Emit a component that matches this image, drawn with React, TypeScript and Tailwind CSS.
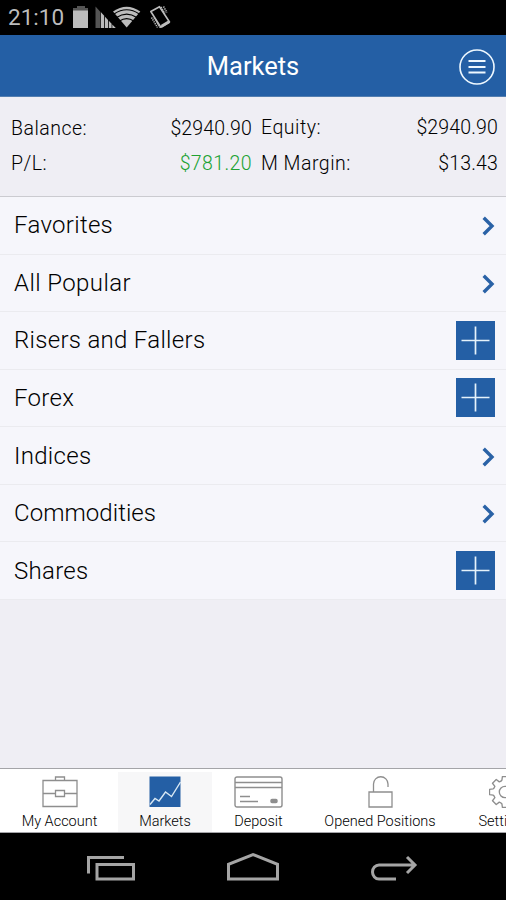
import React from 'react';

type Market = {
  name: string;
  expandable?: boolean;
  tracking?: string;
};

const markets: Market[] = [
  { name: 'Favorites' },
  { name: 'All Popular', tracking: 'tracking-[0.4px]' },
  { name: 'Risers and Fallers', expandable: true },
  { name: 'Forex', expandable: true },
  { name: 'Indices' },
  { name: 'Commodities', tracking: 'tracking-[0.05px]' },
  { name: 'Shares', expandable: true },
];

const StatusBar: React.FC = () => (
  <div className="flex h-[35px] shrink-0 items-center bg-black text-[#bcbcbc]">
    <span className="w-[73px] pl-2 text-[22.5px] leading-[35px]">21:10</span>
    <svg className="h-[35px] w-[110px]" viewBox="73 0 110 35" fill="currentColor">
      <path d="M77 6h8v2h3v3H73V8h4z" fill="#555" />
      <path d="M73 10.5h15V28H73z" />
      <path d="M95.5 6.5l5 5.5v16h-5z" fill="#555" />
      <path d="M101 12.3l3.2 3.5V28H101zM105 16.7l3 3.3v8h-3zM108.8 20.8l2.8 3V28h-2.8zM112.3 24.5l3.5 3.5h-3.5z" />
      <path d="M126.7 27.5L113 11.5Q126.7 1.8 140.3 11.5z" />
      <g fill="none" stroke="#000" strokeWidth="1.2">
        <path d="M114 14Q126.7 5.5 139.3 14" />
        <path d="M116.5 17.5Q126.7 10.7 136.8 17.5" />
        <path d="M119.5 21Q126.7 16.2 133.8 21" />
      </g>
      <g fill="none" stroke="currentColor">
        <path d="M150.8 11.5L159.5 6.7L169.5 22L160.8 27.2z" strokeWidth="1.6" strokeLinejoin="round" />
        <path d="M161 7l4 6.5M163.5 6.5l3.5 6M151.5 17.5l6 10M154 17.5l6 10" strokeWidth="1.5" strokeDasharray="1.3 0.9" />
        <path d="M161.5 26.3l7.5-4.6" strokeWidth="2.8" />
      </g>
    </svg>
  </div>
);

const Header: React.FC = () => (
  <header className="grid h-[62px] shrink-0 grid-cols-[1fr_auto_1fr] items-center border-b border-[#537eb0] bg-[#245fa5] text-white">
    <h1 className="col-start-2 text-[25.5px] leading-8">Markets</h1>
    <button className="mr-[11px] justify-self-end" aria-label="Menu">
      <svg className="mt-[3px] h-9 w-9" viewBox="0 0 36 36" fill="none" stroke="#eef8ff">
        <circle cx="18" cy="18" r="17" strokeWidth="1.6" />
        <path d="M9.5 12h17M9.5 18h17M9.5 23.5h17" strokeWidth="1.8" />
      </svg>
    </button>
  </header>
);

const AccountSummary: React.FC = () => (
  <section className="grid h-[100px] shrink-0 grid-cols-[241px_237px] content-start gap-x-[9px] border-b border-[#cbcbd0] bg-[#efeef4] pt-[13px] pl-[11px] text-[19.5px] leading-[35px] font-light text-black">
    <div className="flex justify-between pt-px">
      <span className="tracking-[0.5px]">Balance:</span>
      <span className="tracking-[0.15px]">$2940.90</span>
    </div>
    <div className="flex justify-between">
      <span className="tracking-[0.5px]">Equity:</span>
      <span className="tracking-[0.15px]">$2940.90</span>
    </div>
    <div className="flex justify-between">
      <span className="tracking-[0.5px]">P/L:</span>
      <span className="tracking-[0.4px] text-[#20a232]">$781.20</span>
    </div>
    <div className="flex justify-between">
      <span className="tracking-[0.5px]">M Margin:</span>
      <span className="tracking-[0.15px]">$13.43</span>
    </div>
  </section>
);

const MarketRow: React.FC<{ market: Market }> = ({ market }) => (
  <li className="flex items-center justify-between border-b border-[#ebebef] pr-[11px] pl-[14px]">
    <span className={`text-[24px] leading-8 font-light ${market.tracking ?? 'tracking-[0.3px]'}`}>
      {market.name}
    </span>
    {market.expandable ? (
      <svg className="h-[39px] w-[39px] bg-[#245fa5]" viewBox="0 0 39 39" fill="none" stroke="#e5f2fb">
        <path d="M5.5 19.5h28M19.5 5.5v28" strokeWidth="1.7" />
      </svg>
    ) : (
      <svg className="mt-[2px] h-5 w-[13px]" viewBox="0 0 13 20" fill="none" stroke="#2a62a6">
        <path d="M1.7 1.7L10 10L1.7 18.3" strokeWidth="3.4" />
      </svg>
    )}
  </li>
);

const Tab: React.FC<{ label: string; className: string; children: React.ReactNode }> = ({
  label,
  className,
  children,
}) => (
  <button className={`flex shrink-0 flex-col items-center pt-1 whitespace-nowrap ${className}`}>
    {children}
    <span className="mt-1 text-[14.5px] leading-5 font-light text-black">{label}</span>
  </button>
);

const TabBar: React.FC = () => (
  <nav className="flex h-[65px] shrink-0 overflow-hidden border-t border-b border-[#a4a4a8] bg-white pt-[3px]">
    <Tab label="My Account" className="w-[118px] pl-px">
      <svg className="h-8 w-9" viewBox="0 0 36 32" fill="none" stroke="#8e8e8e" strokeWidth="1.3">
        <path d="M1 4.5h34v26H1zM13.5 4.5V1h9v3.5M1 17.5h12.5M22.5 17.5H35M13.5 14.5h9v6h-9z" />
      </svg>
    </Tab>
    <Tab label="Markets" className="w-[94px] bg-[#f7f7f8]">
      <svg className="h-8 w-8" viewBox="0 0 32 32" fill="none">
        <path d="M.5 .5h31v30.5H.5z" fill="#245fa5" />
        <path d="M1 28.5l5-6 4 2.5 6.5-9 6 4.5L31.5 6" stroke="#d8e8f4" strokeWidth="1.4" />
      </svg>
    </Tab>
    <Tab label="Deposit" className="w-[92px] pl-px">
      <svg className="h-8 w-[49px]" viewBox="0 0 49 32" fill="none" stroke="#8e8e8e" strokeWidth="1.4">
        <rect x="1" y="1" width="47" height="30" rx="2" />
        <path d="M1 6.5h47M1 11.5h47M6 20.5h10M6 25.5h18" />
        <rect x="37" y="23.5" width="6" height="3" rx="1" fill="#8e8e8e" />
      </svg>
    </Tab>
    <Tab label="Opened Positions" className="w-[152px]">
      <svg className="h-8 w-[25px]" viewBox="0 0 25 32" fill="none" stroke="#8e8e8e" strokeWidth="1.3">
        <path d="M1 16h23v15H1zM5.5 16V8a7 7 0 0 1 14.5 0v3" />
      </svg>
    </Tab>
    <Tab label="Settings" className="w-[97px]">
      <svg className="h-8 w-8" viewBox="0.5 0.5 31 31" fill="none" stroke="#8e8e8e" strokeWidth="1.3" strokeLinejoin="round">
        <path d="M13.5 1h5l.5 3.5q.5 1 2.5 1.7l3-2.3 3.6 3.6-2.3 3q.7 2 1.7 2.5l3.5.5v5l-3.5.5q-1 .5-1.7 2.5l2.3 3-3.6 3.6-3-2.3q-2 .7-2.5 1.7l-.5 3.5h-5l-.5-3.5q-.5-1-2.5-1.7l-3 2.3-3.6-3.6 2.3-3q-.7-2-1.7-2.5l-3.5-.5v-5l3.5-.5q1-.5 1.7-2.5l-2.3-3 3.6-3.6 3 2.3q2-.7 2.5-1.7z" />
        <circle cx="16" cy="16" r="5.5" />
      </svg>
    </Tab>
  </nav>
);

const NavigationBar: React.FC = () => (
  <div className="grid h-[67px] shrink-0 grid-cols-[48px_52px_48px] content-start gap-x-[92px] bg-black pt-[19px] pl-[87px]">
    <svg className="h-8 w-12" viewBox="0 0 48 32" fill="none" stroke="#a5a5a5" strokeWidth="3">
      <path d="M1.5 21.5V5.5H37M10 12.5h36.5v14.5H10z" />
    </svg>
    <svg className="h-8 w-[52px]" viewBox="0 0 52 32" fill="none" stroke="#a5a5a5" strokeWidth="3">
      <path d="M1.500 27V12.3L26 2.5l24.5 9.8V27z" />
    </svg>
    <svg className="h-8 w-12" viewBox="0 0 48 32" fill="none" stroke="#a5a5a5" strokeWidth="3">
      <path d="M25 27H8a6.5 7 0 0 1 0-14H44M36 5l8 8-8 8" />
    </svg>
  </div>
);

export default function App() {
  return (
    <div className="flex h-[900px] w-[506px] flex-col overflow-hidden bg-[#efeef4] font-['Roboto',sans-serif] text-black">
      <StatusBar />
      <Header />
      <AccountSummary />
      <main className="flex-1 bg-[#efeef4]">
        <ul className="grid h-[403px] grid-rows-7 bg-[#f6f6fb]">
          {markets.map((market) => (
            <MarketRow key={market.name} market={market} />
          ))}
        </ul>
      </main>
      <TabBar />
      <NavigationBar />
    </div>
  );
}
